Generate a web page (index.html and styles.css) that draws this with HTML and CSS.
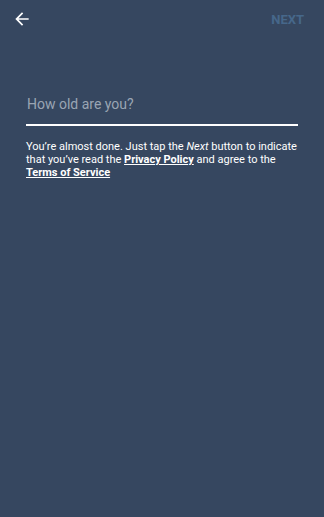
FILE: index.html
```html
<!DOCTYPE html>
<html>
<head>
<meta charset="utf-8">
<link rel="stylesheet" href="styles.css">
</head>
<body>
<div class="screen">
  <header class="topbar">
    <svg class="back" viewBox="0 0 24 24" width="20" height="20"><path fill="#ffffff" d="M20 11H7.83l5.59-5.59L12 4l-8 8 8 8 1.41-1.41L7.83 13H20v-2z"/></svg>
    <span class="next">NEXT</span>
  </header>
  <main class="content">
    <div class="field">
      <span class="placeholder">How old are you?</span>
    </div>
    <p class="legal">You’re almost done. Just tap the <em>Next</em> button to indicate that you’ve read the <a href="#">Privacy Policy</a> and agree to the <a href="#">Terms of Service</a></p>
  </main>
</div>
</body>
</html>
```
FILE: styles.css
```css
html, body {
  margin: 0;
  padding: 0;
  background: #364760;
}
.screen {
  width: 324px;
  height: 517px;
  background: #364760;
  font-family: Roboto, "Noto Sans", sans-serif;
  color: #ffffff;
}
.topbar {
  display: flex;
  justify-content: space-between;
  align-items: center;
  height: 38px;
  padding: 0 20px 0 12px;
}
.back {
  display: block;
}
.next {
  font-weight: bold;
  font-size: 13px;
  color: #46678a;
}
.content {
  padding: 56px 26px 0 26px;
}
.field {
  border-bottom: 2px solid #ffffff;
  padding: 0 0 10px 1px;
}
.placeholder {
  font-size: 14px;
  color: #9aa5b3;
  line-height: 20px;
  display: block;
}
.legal {
  margin: 14px 0 0 0;
  font-size: 11px;
  line-height: 13px;
  color: #ffffff;
}
.legal a {
  color: #ffffff;
  font-weight: bold;
  text-decoration: underline;
}
```
